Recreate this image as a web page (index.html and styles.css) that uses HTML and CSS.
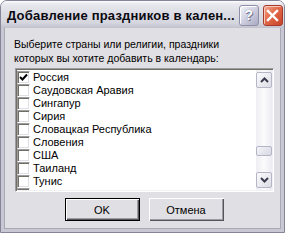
FILE: index.html
```html
<!DOCTYPE html>
<html>
<head>
<meta charset="utf-8">
<link rel="stylesheet" href="styles.css">
</head>
<body>
<div class="window">
  <div class="titlebar">
    <div class="title">Добавление праздников в кален...</div>
    <div class="tbtn help">?</div>
    <div class="tbtn close">
      <svg width="13" height="13" viewBox="0 0 13 13"><path d="M2 2 L11 11 M11 2 L2 11" stroke="#fff" stroke-width="2.4" stroke-linecap="square"/></svg>
    </div>
  </div>
  <div class="frame">
    <div class="content">
      <p class="desc">Выберите страны или религии, праздники<br>которых вы хотите добавить в календарь:</p>
      <div class="listbox">
        <div class="items">
          <div class="item"><span class="cb"><svg width="9" height="9" viewBox="0 0 9 9"><path d="M1 4 L3.5 6.5 L8 1.5" fill="none" stroke="#000" stroke-width="2"/></svg></span>Россия</div>
          <div class="item"><span class="cb"></span>Саудовская Аравия</div>
          <div class="item"><span class="cb"></span>Сингапур</div>
          <div class="item"><span class="cb"></span>Сирия</div>
          <div class="item"><span class="cb"></span>Словацкая Республика</div>
          <div class="item"><span class="cb"></span>Словения</div>
          <div class="item"><span class="cb"></span>США</div>
          <div class="item"><span class="cb"></span>Таиланд</div>
          <div class="item"><span class="cb"></span>Тунис</div>
          <div class="item"><span class="cb"></span></div>
        </div>
        <div class="scrollbar">
          <div class="sbtn"><svg width="9" height="6" viewBox="0 0 9 6"><path d="M1 5 L4.5 1.5 L8 5" fill="none" stroke="#3b3b4d" stroke-width="2"/></svg></div>
          <div class="track"><div class="thumb"></div></div>
          <div class="sbtn"><svg width="9" height="6" viewBox="0 0 9 6"><path d="M1 1 L4.5 4.5 L8 1" fill="none" stroke="#3b3b4d" stroke-width="2"/></svg></div>
        </div>
      </div>
      <div class="buttons">
        <div class="btn default">OK</div>
        <div class="btn">Отмена</div>
      </div>
    </div>
  </div>
</div>
</body>
</html>
```
FILE: styles.css
```css
html, body {
  margin: 0;
  padding: 0;
  background: #ffffff;
}
body {
  font-family: "Liberation Sans", Arial, sans-serif;
  font-size: 11px;
  color: #000;
}
.window {
  width: 283px;
  height: 231px;
  border: 1px solid #85859a;
  border-radius: 7px 7px 0 0;
  display: flex;
  flex-direction: column;
  overflow: hidden;
  background: #e0dfe3;
}
.titlebar {
  height: 27px;
  flex: none;
  display: flex;
  align-items: center;
  padding: 0 1px 0 6px;
  background: linear-gradient(#fdfdfe 0, #e8e8ee 3px, #dcdce4 45%, #d6d6df 80%, #c2c2ce 100%);
}
.title {
  flex: 1;
  font-weight: bold;
  font-size: 13px;
  color: #0a0a10;
  letter-spacing: 0.2px;
  white-space: nowrap;
  padding-top: 1px;
}
.tbtn {
  width: 19px;
  height: 19px;
  border-radius: 3px;
  display: flex;
  align-items: center;
  justify-content: center;
  margin-left: 4px;
  margin-top: 1px;
}
.help {
  border: 1px solid #8e8ea8;
  background: linear-gradient(135deg, #f4f4fa 0%, #cfcfe0 50%, #a9a9c2 100%);
  box-shadow: inset 1px 1px 0 #ffffff;
  color: #fff;
  font-weight: bold;
  font-size: 14px;
  text-shadow: 0 0 1px #6a6a88, 1px 1px 0 #7a7a96;
}
.close {
  border: 1px solid #a53a2a;
  background: linear-gradient(135deg, #f3a994 0%, #e26a4a 45%, #c9432b 100%);
  box-shadow: inset 1px 1px 0 #f8c8b8;
}
.frame {
  flex: 1;
  display: flex;
  border: solid #c8c7d2;
  border-width: 0 3px 3px 3px;
  box-shadow: inset 1px 0 0 #f4f4f7;
}
.content {
  flex: 1;
  display: flex;
  flex-direction: column;
  border-left: 1px solid #a9a8b6;
  border-right: 1px solid #a9a8b6;
  border-bottom: 1px solid #a9a8b6;
  padding: 9px 6px 0 9px;
}
.desc {
  margin: 0;
  font-size: 10.5px;
  line-height: 14px;
}
.listbox {
  margin: 3px 0 0 1px;
  height: 120px;
  display: flex;
  border: 1px solid;
  border-color: #9d9da1 #ffffff #ffffff #9d9da1;
  box-shadow: inset 1px 1px 0 #716f64, inset -1px -1px 0 #f1f0f4;
  background: #fff;
  padding: 1px;
  overflow: hidden;
}
.items {
  flex: 1;
  padding-top: 1px;
  overflow: hidden;
}
.item {
  height: 13px;
  display: flex;
  align-items: center;
  white-space: nowrap;
  line-height: 13px;
}
.cb {
  width: 11px;
  height: 11px;
  flex: none;
  margin-right: 3px;
  border: 1px solid;
  border-color: #9d9da1 #ffffff #ffffff #9d9da1;
  box-shadow: inset 1px 1px 0 #716f64, inset -1px -1px 0 #e0dfe3;
  background: #fff;
  display: flex;
  align-items: center;
  justify-content: center;
  box-sizing: content-box;
}
.scrollbar {
  width: 16px;
  flex: none;
  display: flex;
  flex-direction: column;
  background: linear-gradient(90deg, #eeeef3, #fbfbfd 50%, #ececf2);
}
.sbtn {
  height: 14px;
  flex: none;
  margin: 2px 0;
  border: 1px solid #b6b5c6;
  border-radius: 2px;
  background: linear-gradient(135deg, #fbfbfd, #dcdce6);
  display: flex;
  align-items: center;
  justify-content: center;
}
.track {
  flex: 1;
}
.thumb {
  margin-top: 56px;
  height: 8px;
  border: 1px solid #b6b5c6;
  border-radius: 2px;
  background: linear-gradient(135deg, #f4f4f8, #d8d8e4);
}
.buttons {
  display: flex;
  justify-content: center;
  gap: 9px;
  margin-top: 6px;
}
.btn {
  width: 75px;
  height: 23px;
  box-sizing: border-box;
  display: flex;
  align-items: center;
  justify-content: center;
  background: #e0dfe3;
  box-shadow: inset 1px 1px 0 #ffffff, inset -1px -1px 0 #55545c, inset -2px -2px 0 #9d9da1;
}
.btn.default {
  border: 1px solid #000;
}
```
